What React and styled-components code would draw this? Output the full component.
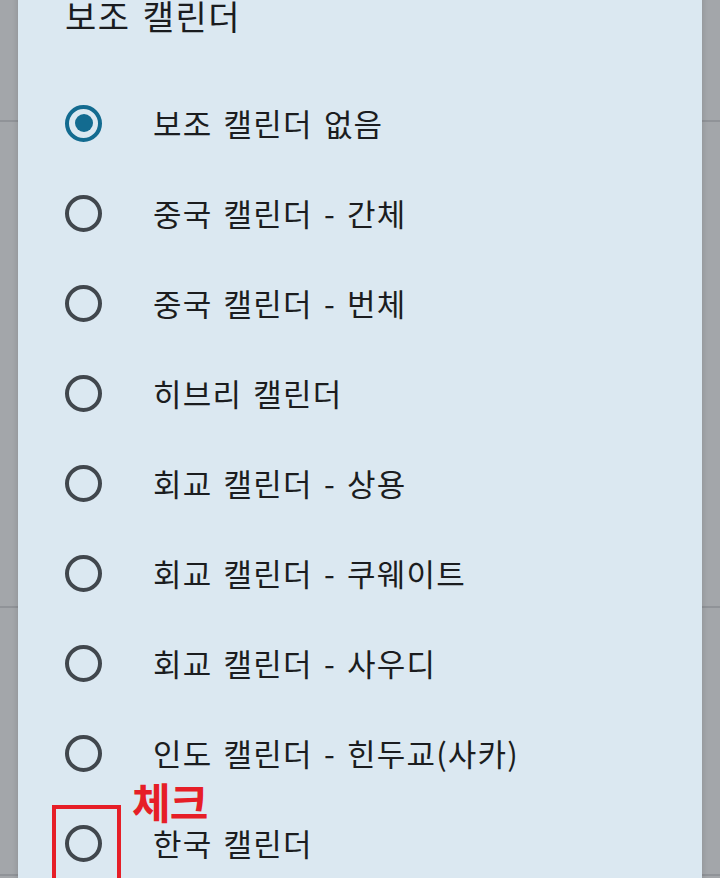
import React from 'react'
import styled, { createGlobalStyle } from 'styled-components'

const calendars = [
  '보조 캘린더 없음',
  '중국 캘린더 - 간체',
  '중국 캘린더 - 번체',
  '히브리 캘린더',
  '회교 캘린더 - 상용',
  '회교 캘린더 - 쿠웨이트',
  '회교 캘린더 - 사우디',
  '인도 캘린더 - 힌두교(사카)',
  '한국 캘린더',
]

function App() {
  const selected = 0
  return (
    <>
      <GlobalStyle />
      <Screen>
        <BackRow $h={122} />
        <BackRow $h={486} />
        <BackRow $h={268} />
        <Dialog>
          <Title>보조 캘린더</Title>
          <Options>
            {calendars.map((name, i) => (
              <Option key={name}>
                <Radio $checked={i === selected} />
                <Label>{name}</Label>
                {name === '한국 캘린더' && (
                  <>
                    <Mark />
                    <MarkText>체크</MarkText>
                  </>
                )}
              </Option>
            ))}
          </Options>
        </Dialog>
      </Screen>
    </>
  )
}

export default App

const GlobalStyle = createGlobalStyle`
  html, body {
    margin: 0;
    padding: 0;
    background: #a3a6aa;
  }
  body {
    font-family: "Noto Sans CJK KR", "Noto Sans", sans-serif;
  }
`

const Screen = styled.div`
  position: relative;
  width: 720px;
  height: 878px;
  overflow: hidden;
  background: #a3a6aa;
`

const BackRow = styled.div`
  height: ${({ $h }) => $h}px;
  box-sizing: border-box;
  border-bottom: 2px solid #909398;
`

const Dialog = styled.div`
  position: absolute;
  top: -28px;
  left: 18px;
  right: 18px;
  bottom: -40px;
  background: #dbe8f1;
  border-radius: 28px;
  box-shadow: 0 0 6px rgba(0, 0, 0, 0.15);
  padding: 22px 0 0 47px;
`

const Title = styled.h2`
  margin: 0;
  font-size: 34px;
  font-weight: 400;
  line-height: 44px;
  letter-spacing: 1.5px;
  word-spacing: 3px;
  color: #1a1c1f;
`

const Options = styled.div`
  display: flex;
  flex-direction: column;
  margin-top: 40px;
`

const Option = styled.div`
  position: relative;
  display: flex;
  align-items: center;
  height: 90px;
  gap: 51px;
`

const Radio = styled.span`
  flex: none;
  box-sizing: border-box;
  width: 37px;
  height: 37px;
  border-radius: 50%;
  border: 4px solid ${({ $checked }) => ($checked ? '#136b90' : '#41474d')};
  display: flex;
  align-items: center;
  justify-content: center;
  &::after {
    content: '';
    display: ${({ $checked }) => ($checked ? 'block' : 'none')};
    width: 18px;
    height: 18px;
    border-radius: 50%;
    background: #136b90;
  }
`

const Label = styled.span`
  font-size: 31px;
  line-height: 36px;
  letter-spacing: 1.2px;
  word-spacing: 3px;
  color: #1b1d20;
  white-space: nowrap;
`

const Mark = styled.span`
  position: absolute;
  left: -13px;
  top: 7px;
  width: 69px;
  height: 80px;
  box-sizing: border-box;
  border: 4px solid #e61e27;
`

const MarkText = styled.span`
  position: absolute;
  left: 67px;
  top: -14px;
  font-size: 42px;
  font-weight: 700;
  line-height: 34px;
  letter-spacing: -1px;
  color: #e61e27;
`
